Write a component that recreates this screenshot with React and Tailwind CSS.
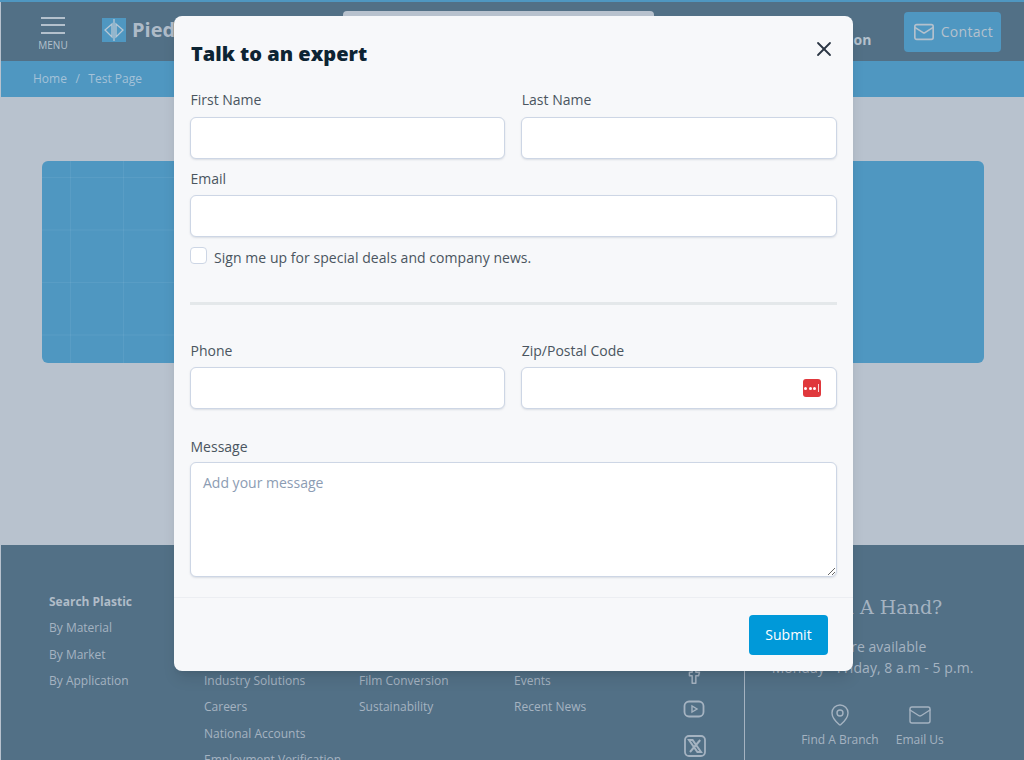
import React from "react";
import { Facebook, Mail, MapPin, X } from "lucide-react";

function Field({ label, className = "", children }) {
  return (
    <div className={className}>
      <label className="block ml-[0.5px] text-sm leading-5 text-[#4a5560]">{label}</label>
      {children}
    </div>
  );
}

const inputClass =
  "block w-full h-[42px] px-3 bg-white rounded-md border border-[#cdd6e5] shadow-[0_1px_2px_rgba(100,116,139,0.2)] outline-none";

function Modal() {
  return (
    <div className="absolute left-[174px] top-4 w-[679px] h-[655px] bg-[#f7f8fa] rounded-lg shadow-lg flex flex-col">
      <div className="pl-4 pr-[16.5px] pt-6 flex-1">
        <div className="flex items-start justify-between">
          <h2 className="ml-px text-xl leading-[28px] font-extrabold text-[#0d2433]">Talk to an expert</h2>
          <button className="mr-px mt-[-3px] text-[#2b3644]">
            <X size={24} strokeWidth={1.8} />
          </button>
        </div>
        <div className="mt-[22px] grid grid-cols-2 gap-x-4">
          <Field label="First Name">
            <input className={`mt-[7px] ${inputClass}`} />
          </Field>
          <Field label="Last Name">
            <input className={`mt-[7px] ${inputClass}`} />
          </Field>
        </div>
        <Field label="Email" className="mt-[10px]">
          <input className={`mt-[6px] ${inputClass}`} />
        </Field>
        <label className="mt-[10px] flex items-start gap-[7px] text-sm leading-5 tracking-[0.05px] text-[#4a5560]">
          <input
            type="checkbox"
            className="appearance-none w-[17px] h-[17px] bg-white rounded-[4px] border border-[#cdd6e5]"
          />
          <span className="mt-[1px]">Sign me up for special deals and company news.</span>
        </label>
        <div className="mt-[34px] h-[3px] bg-[#e4e8ea]"></div>
        <div className="mt-9 grid grid-cols-2 gap-x-4">
          <Field label="Phone">
            <input className={`mt-[6px] ${inputClass}`} />
          </Field>
          <Field label="Zip/Postal Code">
            <div className="relative mt-[6px]">
              <input className={inputClass} />
              <div className="absolute right-4 top-3 w-[18px] h-[18px] rounded-[3px] bg-[#e0383c] flex items-center justify-center gap-[1.5px]">
                <span className="w-[3px] h-[3px] rounded-full bg-white"></span>
                <span className="w-[3px] h-[3px] rounded-full bg-white"></span>
                <span className="w-[3px] h-[3px] rounded-full bg-white"></span>
                <span className="w-[1.5px] h-2 bg-white/80"></span>
              </div>
            </div>
          </Field>
        </div>
        <Field label="Message" className="mt-7">
          <textarea
            placeholder="Add your message"
            className="block mt-[5px] w-full h-[115px] px-3 py-[10px] text-sm leading-5 bg-white rounded-md border border-[#cdd6e5] shadow-[0_1px_2px_rgba(100,116,139,0.2)] outline-none placeholder:text-[#8c9cb3]"
          ></textarea>
        </Field>
      </div>
      <div className="h-[74px] border-t border-[#eceef2] px-[25px] pt-[17px] flex justify-end">
        <button className="w-[79px] h-10 rounded bg-[#0099d9] text-white text-sm">Submit</button>
      </div>
    </div>
  );
}

function Header() {
  return (
    <header className="h-[59px] bg-[#527086] flex items-center pl-[32px] text-[#b4c1cd]">
      <div className="w-10 flex flex-col items-center">
        <div className="w-6 flex flex-col gap-[5.5px] mt-[5px]">
          <span className="h-[2px] bg-[#b4c1cd]"></span>
          <span className="h-[2px] bg-[#b4c1cd]"></span>
          <span className="h-[2px] bg-[#b4c1cd]"></span>
        </div>
        <span className="mt-[4px] text-[10px] leading-[14px]">MENU</span>
      </div>
      <div className="ml-[29px] w-6 h-6 bg-[#4f97c1] flex items-center justify-center mt-[-3px]">
        <svg width="24" height="24" viewBox="0 0 24 24" fill="none" stroke="#b8c7d4" strokeWidth="1.3">
          <path d="M10 6 3 12l7 7zM14 6l7 6-7 7zM12 1v22" />
        </svg>
      </div>
      <span className="ml-[6px] text-xl font-bold text-[#aebbc8] mt-[-3px]">Piedmont</span>
      <div className="ml-[114px] w-[311px] h-10 self-start mt-[9px] bg-[#b8c2ce] rounded"></div>
      <span className="ml-[157px] text-sm font-bold mt-[16px]">Location</span>
      <button className="ml-[33px] w-[97px] h-10 rounded bg-[#4f97c1] flex items-center justify-center gap-[6px] text-sm font-medium tracking-[0.3px]">
        <Mail size={22} strokeWidth={1.8} />
        Contact
      </button>
    </header>
  );
}

function Hero() {
  return (
    <main className="h-[448px] bg-[#b8c2ce] pl-[41px] pr-10 pt-16">
      <div className="relative h-[202px] bg-[#4f97c1] rounded-md overflow-hidden">
        <div className="absolute left-0 top-0 w-[150px] h-full bg-[linear-gradient(to_right,rgba(255,255,255,0.06)_1px,transparent_1px),linear-gradient(to_bottom,rgba(255,255,255,0.06)_1px,transparent_1px)] bg-[size:53px_52.5px] bg-[position:28px_16px]"></div>
      </div>
    </main>
  );
}

function Footer() {
  return (
    <footer className="h-[215px] bg-[#527086] overflow-hidden flex text-xs leading-[26.4px] text-[#a5b3c1]">
      <div className="w-[155px] ml-[48px] pt-[44px]">
        <p className="font-bold text-[#b0bcc8]">Search Plastic</p>
        <p>By Material</p>
        <p>By Market</p>
        <p>By Application</p>
      </div>
      <div className="w-[155px] pt-[123px]">
        <p>Industry Solutions</p>
        <p>Careers</p>
        <p>National Accounts</p>
        <p>Employment Verification</p>
      </div>
      <div className="w-[155px] pt-[123px]">
        <p>Film Conversion</p>
        <p>Sustainability</p>
      </div>
      <div className="w-[155px] pt-[123px]">
        <p>Events</p>
        <p>Recent News</p>
      </div>
      <div className="w-[75px] pt-[118px] flex flex-col items-start pl-[14px]">
        <Facebook size={22} strokeWidth={1.6} />
        <svg width="22" height="18" viewBox="0 0 22 18" fill="none" stroke="currentColor" strokeWidth="1.8" className="mt-[15px]">
          <rect x="1.5" y="1.5" width="19" height="15" rx="4.5" />
          <path d="M9 6v6l5-3z" strokeWidth="1.4" />
        </svg>
        <svg width="22" height="22" viewBox="0 0 22 22" fill="none" className="mt-[17px] ml-px">
          <rect x="1" y="1" width="20" height="20" rx="4" stroke="currentColor" strokeWidth="1.8" />
          <path d="M5 5h3.6l8.4 12h-3.6zM16.2 5 6 17" stroke="currentColor" strokeWidth="2" />
        </svg>
      </div>
      <div className="flex-1 border-l border-[#a5b3c1] text-center mt-[125px] pr-6">
        <div className="mt-[-77px]">
          <h3 className="font-['DejaVu_Serif',serif] text-[19px] leading-7 whitespace-nowrap">Need A Hand?</h3>
          <p className="mt-[15px] text-sm leading-[21px] tracking-[0.05px]">We are available</p>
          <p className="text-sm leading-[21px] tracking-[0.05px]">Monday - Friday, 8 a.m - 5 p.m.</p>
        </div>
        <div className="mt-[25px] flex justify-center gap-[17px]">
          <div className="flex flex-col items-center">
            <MapPin size={24} strokeWidth={1.4} />
            <span className="mt-[3px] leading-[20px]">Find A Branch</span>
          </div>
          <div className="flex flex-col items-center">
            <Mail size={24} strokeWidth={1.4} />
            <span className="mt-[3px] leading-[20px]">Email Us</span>
          </div>
        </div>
      </div>
    </footer>
  );
}

export default function App() {
  return (
    <div className="relative h-[760px] overflow-hidden bg-[#b8c2ce] font-['Open_Sans',sans-serif]">
      <div className="h-[2px] bg-[#4f97c1]"></div>
      <div className="ml-px">
        <Header />
        <div className="h-9 bg-[#4f97c1] pl-8 flex items-center gap-[8.5px] text-xs text-[#a5c2d8]">
          <span>Home</span>
          <span>/</span>
          <span>Test Page</span>
        </div>
        <Hero />
        <Footer />
      </div>
      <Modal />
    </div>
  );
}
